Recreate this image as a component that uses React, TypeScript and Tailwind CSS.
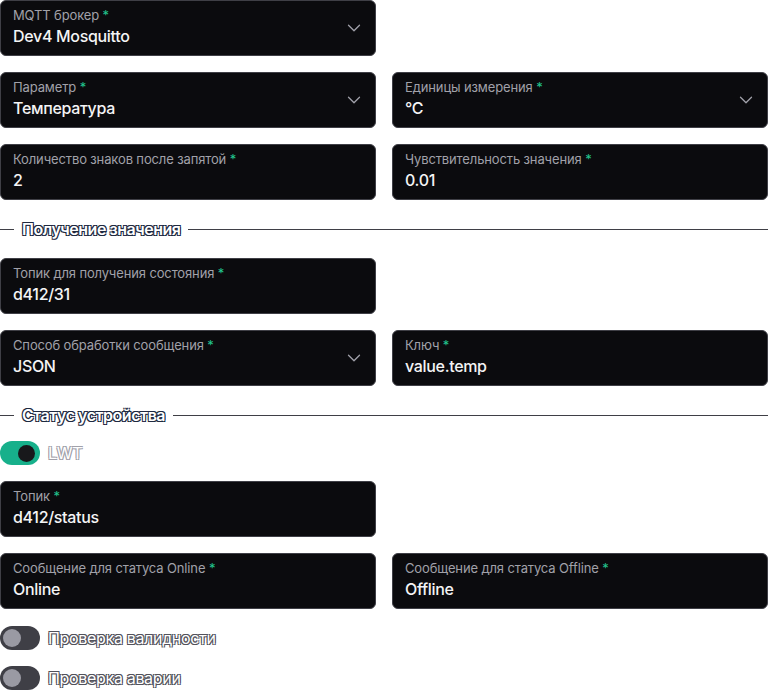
import React from 'react';
import { ChevronDown } from 'lucide-react';

type FieldProps = { label: string; value: string; select?: boolean };

function Field({ label, value, select }: FieldProps) {
  return (
    <div className="relative h-14 rounded-md border border-[#3f3f46] bg-[#0b0b0e] px-3 pt-[6px]">
      <div className="text-[13px] leading-4 tracking-[-0.01em] text-[#a1a1a9]">
        {label} <span className="text-[#22c58f]">*</span>
      </div>
      <div className="mt-[1px] text-base font-medium leading-6 tracking-[-0.02em] text-[#f4f4f5]">{value}</div>
      {select && (
        <ChevronDown
          size={22}
          strokeWidth={1.4}
          className="absolute right-[10px] top-[16px] text-[#a1a1aa]"
        />
      )}
    </div>
  );
}

function Section({ title }: { title: string }) {
  return (
    <div className="flex h-[26px] items-center">
      <div className="h-px w-[14px] bg-[#3f3f46]" />
      <span className="px-2 text-[16px] font-semibold tracking-[-0.03em] text-white [text-shadow:-1px_-1px_0_#1e2940,1px_-1px_0_#1e2940,-1px_1px_0_#1e2940,1px_1px_0_#1e2940]">
        {title}
      </span>
      <div className="h-px flex-1 bg-[#3f3f46]" />
    </div>
  );
}

function Toggle({ label, on }: { label: string; on?: boolean }) {
  return (
    <div className="flex h-6 items-center gap-2">
      <div
        className={`flex h-6 w-10 items-center rounded-full px-[3px] ${
          on ? 'justify-end bg-[#17b08b]' : 'justify-start bg-[#3f3f46]'
        }`}
      >
        <div className={`rounded-full ${on ? 'h-[17px] w-[17px] bg-[#18181b] mr-[2px]' : 'h-[18px] w-[18px] bg-[#9a9aa3]'}`} />
      </div>
      <span
        className={`text-base tracking-[-0.02em] text-white ${
          on
            ? '[text-shadow:-1px_-1px_0_#a1a1aa,1px_-1px_0_#a1a1aa,-1px_1px_0_#a1a1aa,1px_1px_0_#a1a1aa]'
            : '[text-shadow:-1px_-1px_0_#52525b,1px_-1px_0_#52525b,-1px_1px_0_#52525b,1px_1px_0_#52525b]'
        }`}
      >
        {label}
      </span>
    </div>
  );
}

export default function App() {
  return (
    <div className="min-h-screen bg-white font-['Inter',sans-serif]">
      <div className="flex w-[768px] flex-col gap-4">
        <div className="grid grid-cols-2 gap-4">
          <Field label="MQTT брокер" value="Dev4 Mosquitto" select />
        </div>
        <div className="grid grid-cols-2 gap-4">
          <Field label="Параметр" value="Температура" select />
          <Field label="Единицы измерения" value="°C" select />
        </div>
        <div className="grid grid-cols-2 gap-4">
          <Field label="Количество знаков после запятой" value="2" />
          <Field label="Чувствительность значения" value="0.01" />
        </div>

        <Section title="Получение значения" />

        <div className="grid grid-cols-2 gap-4">
          <Field label="Топик для получения состояния" value="d412/31" />
        </div>
        <div className="grid grid-cols-2 gap-4">
          <Field label="Способ обработки сообщения" value="JSON" select />
          <Field label="Ключ" value="value.temp" />
        </div>

        <Section title="Статус устройства" />

        <div className="-mt-[3px]">
          <Toggle label="LWT" on />
        </div>

        <div className="grid grid-cols-2 gap-4">
          <Field label="Топик" value="d412/status" />
        </div>
        <div className="grid grid-cols-2 gap-4">
          <Field label="Сообщение для статуса Online" value="Online" />
          <Field label="Сообщение для статуса Offline" value="Offline" />
        </div>

        <div className="mt-[1px]">
          <Toggle label="Проверка валидности" />
        </div>
        <Toggle label="Проверка аварии" />
      </div>
    </div>
  );
}
